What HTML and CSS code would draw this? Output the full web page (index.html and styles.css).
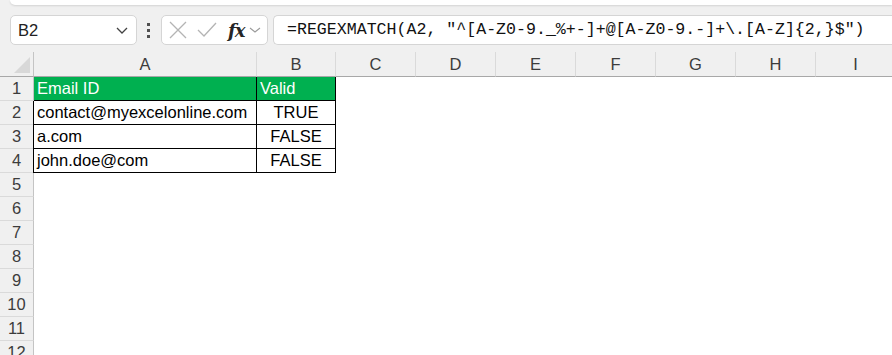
FILE: index.html
```html
<!DOCTYPE html>
<html>

<head>
    <meta charset="utf-8">
    <title>REGEXMATCH</title>
    <link rel="stylesheet" href="styles.css">
</head>

<body>
    <div class="ribbon-edge"></div>
    <div class="toolbar">
        <div class="name-box">
            <span>B2</span>
            <svg width="12" height="7" viewBox="0 0 12 7"><polyline points="1,1 6,6 11,1" fill="none" stroke="#424242" stroke-width="1.3"/></svg>
        </div>
        <div class="grip"><i></i><i></i><i></i></div>
        <div class="fx-box">
            <svg class="ico" width="18" height="18" viewBox="0 0 18 18"><path d="M1 1 L17 17 M17 1 L1 17" stroke="#b4b4b4" stroke-width="1.3" fill="none"/></svg>
            <svg class="ico" width="20" height="16" viewBox="0 0 20 16"><polyline points="1,8 7,14 19,1" stroke="#b4b4b4" stroke-width="1.3" fill="none"/></svg>
            <span class="fx">fx</span>
            <svg width="12" height="6" viewBox="0 0 12 6"><polyline points="1,1 6,5 11,1" fill="none" stroke="#9a9a9a" stroke-width="1.1"/></svg>
        </div>
        <div class="formula">=REGEXMATCH(A2, "^[A-Z0-9._%+-]+@[A-Z0-9.-]+\.[A-Z]{2,}$")</div>
    </div>

    <div class="sheet">
        <div class="corner"><div class="tri"></div></div>
        <div class="col">A</div>
        <div class="col">B</div>
        <div class="col">C</div>
        <div class="col">D</div>
        <div class="col">E</div>
        <div class="col">F</div>
        <div class="col">G</div>
        <div class="col">H</div>
        <div class="col">I</div>

        <div class="row">1</div>
        <div class="cell head">Email ID</div>
        <div class="cell head">Valid</div>
        <div class="blank"></div><div class="blank"></div><div class="blank"></div><div class="blank"></div><div class="blank"></div><div class="blank"></div><div class="blank"></div>

        <div class="row">2</div>
        <div class="cell first">contact@myexcelonline.com</div>
        <div class="cell mid">TRUE</div>
        <div class="blank"></div><div class="blank"></div><div class="blank"></div><div class="blank"></div><div class="blank"></div><div class="blank"></div><div class="blank"></div>

        <div class="row">3</div>
        <div class="cell first">a.com</div>
        <div class="cell mid">FALSE</div>
        <div class="blank"></div><div class="blank"></div><div class="blank"></div><div class="blank"></div><div class="blank"></div><div class="blank"></div><div class="blank"></div>

        <div class="row">4</div>
        <div class="cell first">john.doe@com</div>
        <div class="cell mid">FALSE</div>
        <div class="blank"></div><div class="blank"></div><div class="blank"></div><div class="blank"></div><div class="blank"></div><div class="blank"></div><div class="blank"></div>

        <div class="row">5</div><div class="empty"></div>
        <div class="row">6</div><div class="empty"></div>
        <div class="row">7</div><div class="empty"></div>
        <div class="row">8</div><div class="empty"></div>
        <div class="row">9</div><div class="empty"></div>
        <div class="row">10</div><div class="empty"></div>
        <div class="row">11</div><div class="empty"></div>
        <div class="row">12</div><div class="empty"></div>
    </div>
</body>

</html>
```

FILE: styles.css
```css
* {
    margin: 0;
    padding: 0;
    box-sizing: border-box;
}

body {
    width: 892px;
    height: 355px;
    overflow: hidden;
    background: #f0f0f0;
    font-family: "Liberation Sans", Arial, sans-serif;
    font-size: 16.5px;
}

.ribbon-edge {
    height: 5px;
    margin-left: 10px;
    background: #fff;
    border-bottom-left-radius: 7px;
    box-shadow: 0 1px 2px rgba(0, 0, 0, .12);
}

.toolbar {
    display: flex;
    align-items: center;
    height: 30px;
    margin: 10px 0 7px 10px;
}

.name-box {
    display: flex;
    align-items: center;
    justify-content: space-between;
    width: 127px;
    height: 30px;
    padding: 0 8px 0 7px;
    background: #fff;
    border: 1px solid #d5d5d5;
    border-radius: 5px;
    color: #222;
}

.grip {
    display: flex;
    flex-direction: column;
    gap: 3px;
    margin: 0 11px 0 10px;
}

.grip i {
    width: 3px;
    height: 3px;
    background: #505050;
}

.fx-box {
    display: flex;
    align-items: center;
    width: 107px;
    height: 30px;
    padding-left: 7px;
    background: #fff;
    border: 1px solid #d5d5d5;
    border-radius: 5px;
}

.fx-box .ico {
    margin-right: 10px;
}

.fx {
    font-family: "DejaVu Serif", "Liberation Serif", serif;
    font-style: italic;
    font-weight: bold;
    font-size: 18px;
    color: #262626;
    margin: 0 5px 0 1px;
    letter-spacing: -1px;
}

.formula {
    flex: 1;
    height: 30px;
    margin-left: 5px;
    padding-left: 13px;
    line-height: 28px;
    background: #fff;
    border: 1px solid #d5d5d5;
    border-right: none;
    border-radius: 5px 0 0 5px;
    font-family: "Liberation Mono", "DejaVu Sans Mono", monospace;
    font-size: 16.6px;
    color: #111;
    white-space: nowrap;
}

.sheet {
    display: grid;
    grid-template-columns: 34px 223px 79px repeat(7, 80px);
    grid-template-rows: 25px;
    grid-auto-rows: 24px;
    background: #fff;
}

.corner {
    display: flex;
    align-items: flex-end;
    justify-content: flex-end;
    padding: 0 3px 3px 0;
    background: #f0f0f0;
    border-right: 1px solid #c4c4c4;
    border-bottom: 1px solid #a8a8a8;
}

.corner .tri {
    width: 16px;
    height: 16px;
    background: #d8d8d8;
    clip-path: polygon(100% 0, 100% 100%, 0 100%);
}

.col {
    text-align: center;
    line-height: 24px;
    color: #3c3c3c;
    background: #f0f0f0;
    border-right: 1px solid #dadada;
    border-bottom: 1px solid #a8a8a8;
}

.row {
    text-align: center;
    line-height: 23px;
    color: #3c3c3c;
    background: #f0f0f0;
    border-right: 1px solid #c4c4c4;
    border-bottom: 1px solid #dadada;
}

.cell {
    padding-left: 3px;
    line-height: 23px;
    color: #000;
    white-space: nowrap;
    border-right: 1px solid #000;
    border-bottom: 1px solid #000;
}

.cell.head {
    background: #00b050;
    color: #fff;
}

.cell.first {
    box-shadow: -1px 0 0 #000;
}

.cell.mid {
    padding-left: 0;
    text-align: center;
}

.empty {
    grid-column: span 9;
}
```
